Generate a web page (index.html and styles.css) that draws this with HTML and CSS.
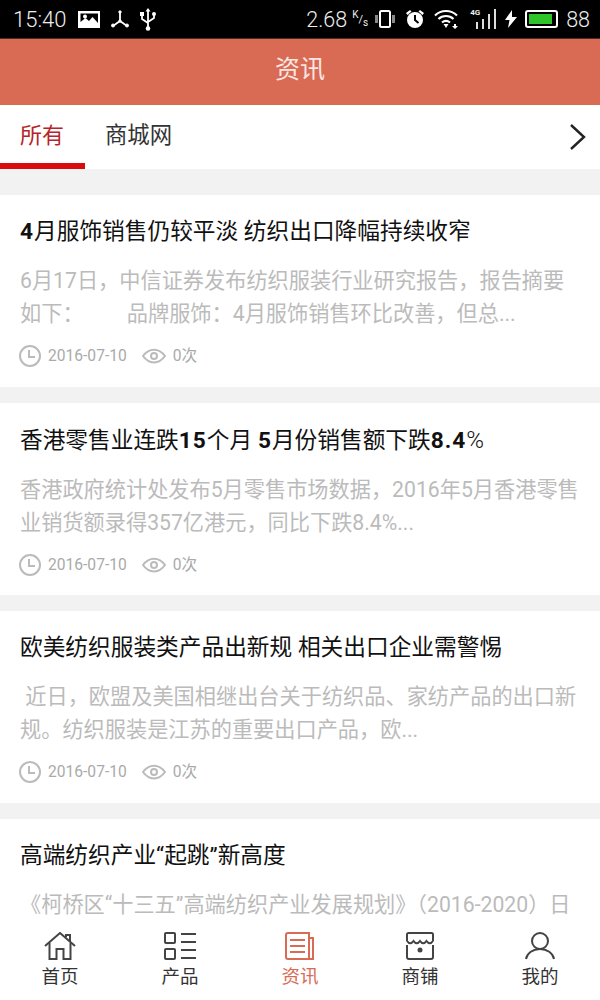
FILE: index.html
```html
<!doctype html>
<html>
<head>
	<meta charset="utf-8">
	<title>资讯</title>
	<link rel="stylesheet" href="styles.css">
</head>

<body>
<div class="app">

	<div class="status">
		<span class="time">15:40</span>
		<svg class="st st-img" width="22" height="17" viewBox="0 0 22 17"><path fill="#fff" fill-rule="evenodd" d="M0 0h22v17H0zM2.500 2.500v8.500l5-4 3.500 3 3.500-4 5.500 6V2.500zM7 3.500a2 2 0 1 1 0 4 2 2 0 0 1 0-4z"/></svg>
		<svg class="st" width="20" height="18" viewBox="0 0 20 18"><g fill="#fff" stroke="#fff"><path stroke-width="1.800" fill="none" d="M10 2v9M10 11l-7 5M10 11l7 5"/><circle cx="10" cy="2" r="1.200"/><circle cx="3" cy="15.500" r="1.500"/><circle cx="17" cy="15.500" r="1.500"/><circle cx="10" cy="11" r="1.200"/></g></svg>
		<svg class="st" width="16" height="23" viewBox="0 0 16 23"><g fill="none" stroke="#fff" stroke-width="1.800"><path d="M8 3v18M2 7v4l6 4M14 7v3l-6 4"/></g><g fill="#fff"><path d="M8 0l2.500 3.500h-5z"/><circle cx="8" cy="20.500" r="2.300"/><rect x="0" y="4" width="4" height="4"/><circle cx="14" cy="6" r="2"/></g></svg>

		<span class="st-gap"></span>

		<span class="speed">2.68</span>
		<span class="unit"><sup>K</sup>/<sub>s</sub></span>
		<svg class="st st-vib" width="20" height="20" viewBox="0 0 20 20"><rect x="5" y="2" width="10" height="16" rx="1.500" fill="none" stroke="#fff" stroke-width="2"/><path fill="#888" d="M0 6h3v8H0zM17 6h3v8h-3z"/></svg>
		<svg class="st st-alarm" width="20" height="20" viewBox="0 0 20 20"><circle cx="10" cy="11" r="8" fill="#fff"/><path d="M10 6v5l3.500 3" fill="none" stroke="#000" stroke-width="2"/><path fill="#fff" d="M1 4l4-3 1.500 1.500-4 3.500zM19 4l-4-3-1.500 1.500 4 3.500z"/></svg>
		<svg class="st st-wifi" width="26" height="20" viewBox="0 0 26 20"><g fill="none" stroke="#fff" stroke-width="2.200"><path d="M1 6.500c6-6 16-6 22 0M4.500 10c4-4 11-4 15 0M8 13.500c2.500-2 5.500-2 8 0"/></g><path fill="#fff" d="M9.500 15h5L12 19zM20 15h2v2h2l-3 3-3-3h2z"/></svg>
		<span class="signal">
			<span class="four-g">4G</span>
			<i class="s1"></i><i class="s2"></i><i class="s3"></i><i class="s4"></i>
		</span>
		<svg class="st st-bolt" width="12" height="20" viewBox="0 0 12 20"><path fill="#fff" d="M7 1L0 11h4.500L3 19l9-11H7z"/></svg>
		<span class="battery"><span class="battery-fill"></span></span>
		<span class="level">88</span>
	</div>

	<div class="title-bar">资讯</div>

	<div class="tabs">
		<a class="tab tab-on">所有</a>
		<a class="tab">商城网</a>
		<svg class="tab-more" width="20" height="28" viewBox="0 0 20 28"><path d="M3 2l13 12L3 26" fill="none" stroke="#222" stroke-width="2.400"/></svg>
	</div>

	<div class="list">

		<div class="card">
			<h3><b>4</b>月服饰销售仍较平淡 纺织出口降幅持续收窄</h3>
			<p>6月17日，中信证券发布纺织服装行业研究报告，报告摘要如下：&emsp;&emsp;品牌服饰：4月服饰销售环比改善，但总...</p>
			<div class="meta">
				<svg width="24" height="24" viewBox="0 0 24 24"><circle cx="12" cy="12" r="10" fill="none" stroke="#bbb" stroke-width="2"/><path d="M11 6v7h6" fill="none" stroke="#bbb" stroke-width="2"/></svg>
				<span class="date">2016-07-10</span>
				<svg width="24" height="16" viewBox="0 0 24 16"><path d="M1 8c6-8.500 16-8.500 22 0-6 8.500-16 8.500-22 0z" fill="none" stroke="#bbb" stroke-width="2"/><circle cx="12" cy="8" r="3" fill="none" stroke="#bbb" stroke-width="2"/></svg>
				<span class="views">0次</span>
			</div>
		</div>

		<div class="card">
			<h3>香港零售业连跌<b>15</b>个月 <b>5</b>月份销售额下跌<b>8.4</b><span class="pct">%</span></h3>
			<p>香港政府统计处发布5月零售市场数据，2016年5月香港零售业销货额录得357亿港元，同比下跌8.4%...</p>
			<div class="meta">
				<svg width="24" height="24" viewBox="0 0 24 24"><circle cx="12" cy="12" r="10" fill="none" stroke="#bbb" stroke-width="2"/><path d="M11 6v7h6" fill="none" stroke="#bbb" stroke-width="2"/></svg>
				<span class="date">2016-07-10</span>
				<svg width="24" height="16" viewBox="0 0 24 16"><path d="M1 8c6-8.500 16-8.500 22 0-6 8.500-16 8.500-22 0z" fill="none" stroke="#bbb" stroke-width="2"/><circle cx="12" cy="8" r="3" fill="none" stroke="#bbb" stroke-width="2"/></svg>
				<span class="views">0次</span>
			</div>
		</div>

		<div class="card">
			<h3>欧美纺织服装类产品出新规 相关出口企业需警惕</h3>
			<p>&nbsp;近日，欧盟及美国相继出台关于纺织品、家纺产品的出口新规。纺织服装是江苏的重要出口产品，欧...</p>
			<div class="meta">
				<svg width="24" height="24" viewBox="0 0 24 24"><circle cx="12" cy="12" r="10" fill="none" stroke="#bbb" stroke-width="2"/><path d="M11 6v7h6" fill="none" stroke="#bbb" stroke-width="2"/></svg>
				<span class="date">2016-07-10</span>
				<svg width="24" height="16" viewBox="0 0 24 16"><path d="M1 8c6-8.500 16-8.500 22 0-6 8.500-16 8.500-22 0z" fill="none" stroke="#bbb" stroke-width="2"/><circle cx="12" cy="8" r="3" fill="none" stroke="#bbb" stroke-width="2"/></svg>
				<span class="views">0次</span>
			</div>
		</div>

		<div class="card">
			<h3>高端纺织产业“起跳”新高度</h3>
			<p>《柯桥区“十三五”高端纺织产业发展规划》（2016-2020）日</p>
		</div>

	</div>

	<div class="nav">
		<a class="nav-item">
			<svg width="32" height="28" viewBox="0 0 32 28"><g fill="none" stroke="#444" stroke-width="2"><path d="M1 14L16 1l15 13"/><path d="M5.500 11v16h7V17h7v10h7V11"/><path d="M22 5V3h4v7"/></g></svg>
			首页
		</a>
		<a class="nav-item">
			<svg width="32" height="28" viewBox="0 0 32 28"><g fill="none" stroke="#444" stroke-width="2"><rect x="1" y="1" width="10" height="10" rx="1"/><rect x="1" y="17" width="10" height="10" rx="1"/><path d="M17 2h15M17 10h15M17 18h15M17 26h15"/></g></svg>
			产品
		</a>
		<a class="nav-item nav-on">
			<svg width="32" height="28" viewBox="0 0 32 28"><g fill="none" stroke="#d96a54" stroke-width="2"><path d="M4 1h21v26H4a2 2 0 0 1-2-2V3a2 2 0 0 1 2-2z"/><path d="M25 6h4v21h-4M6 8h15M6 14h15M6 20h15"/></g></svg>
			资讯
		</a>
		<a class="nav-item">
			<svg width="32" height="28" viewBox="0 0 32 28"><g fill="none" stroke="#444" stroke-width="2"><path d="M3 9V2.500A1.500 1.500 0 0 1 4.500 1h23A1.500 1.500 0 0 1 29 2.500V9"/><path d="M3 9c2 3 4.500 3 6.500 0 2 3 4.500 3 6.500 0 2 3 4.500 3 6.500 0 2 3 4.500 3 6.500 0"/><path d="M3 13v12a2 2 0 0 0 2 2h22a2 2 0 0 0 2-2V13"/></g><circle cx="16" cy="18" r="2.500" fill="#444"/></svg>
			商铺
		</a>
		<a class="nav-item">
			<svg width="32" height="28" viewBox="0 0 32 28"><g fill="none" stroke="#444" stroke-width="2"><circle cx="16" cy="9" r="8"/><path d="M2 27c1-6 7-10 14-10s13 4 14 10"/></g></svg>
			我的
		</a>
	</div>

</div>
</body>
</html>
```

FILE: styles.css
```css
* { box-sizing: border-box; }
html, body { margin: 0; padding: 0; }
body { background: #fff; font-family: Roboto, "Noto Sans CJK SC", sans-serif; }
.app { width: 600px; height: 1000px; display: flex; flex-direction: column; overflow: hidden; }

.status { height: 39px; flex: none; background: #000; color: #eee; display: flex; align-items: center; padding: 0 10px 0 13px; border-bottom: 1px solid #4a2a24; }
.st { flex: none; margin-left: 10px; }
.st-img { margin-left: 12px; }
.st-gap { flex: 1; }
.time { font-size: 22px; font-weight: 300; }
.speed { font-size: 21.5px; font-weight: 300; }
.unit { font-size: 11px; margin: 0 0 0 5px; width: 15px; }
.unit sup, .unit sub { font-size: 10px; line-height: 0; }
.st-vib { margin-left: 8px; }
.st-alarm { margin-left: 10px; }
.st-wifi { margin-left: 9px; }
.st-bolt { margin-left: 9px; }
.signal { position: relative; display: flex; align-items: flex-end; justify-content: flex-end; gap: 4px; height: 20px; margin-left: 10px; width: 26px; }
.signal i { display: block; width: 2px; background: #ddd; }
.signal .s1 { height: 7px; }
.signal .s2 { height: 10px; }
.signal .s3 { height: 15px; }
.signal .s4 { height: 20px; }
.four-g { position: absolute; left: 0; top: 0; font-size: 8px; line-height: 8px; font-weight: bold; }
.battery { flex: none; margin-left: 8px; width: 33px; height: 18px; border: 2px solid #fff; border-radius: 3px; padding: 2px; }
.battery-fill { display: block; height: 100%; width: 90%; background: #2fc52a; }
.level { font-size: 21.5px; font-weight: 300; margin-left: 8px; }

.title-bar { height: 66px; flex: none; background: #d96a54; color: #fbe6e1; font-size: 25px; display: flex; align-items: center; justify-content: center; padding-bottom: 10px; }

.tabs { height: 64px; flex: none; background: #fff; display: flex; align-items: stretch; position: relative; }
.tab { width: 85px; font-size: 22px; color: #333; display: flex; align-items: center; justify-content: center; padding: 0 1px 3px 0; border-bottom: 6px solid transparent; }
.tab + .tab { width: 107px; font-size: 22.4px; padding-left: 1px; }
.tab-on { color: #b8232a; border-bottom-color: #d80c0c; }
.tab-more { position: absolute; right: 12px; top: 18px; }

.list { flex: 1; min-height: 0; overflow: hidden; background: #f2f2f2; padding-top: 26px; display: flex; flex-direction: column; gap: 16px; }
.card { flex: none; height: 192px; background: #fff; padding: 18px 20px 0; }
.card h3 { margin: 0; font-size: 22.7px; line-height: 38px; font-weight: normal; color: #111; white-space: nowrap; }
.card h3 b { font-weight: bold; letter-spacing: 1px; }
.pct { font-size: 24px; font-weight: 300; }
.card p { margin: 13px 0 0; font-size: 21.2px; line-height: 33px; color: #bbb; height: 66px; }
.meta { display: flex; align-items: center; margin-top: 14px; margin-left: -2px; font-size: 15.6px; line-height: 20px; color: #aaa; }
.date { margin: 0 15px 0 6px; }
.views { margin-left: 7px; }

.nav { height: 78px; flex: none; background: #fff; display: flex; padding-top: 10px; }
.nav-item { flex: 1; display: flex; flex-direction: column; align-items: center; font-size: 18.5px; line-height: 24px; color: #333; gap: 5px; }
.nav-on { color: #d96a54; }
```
